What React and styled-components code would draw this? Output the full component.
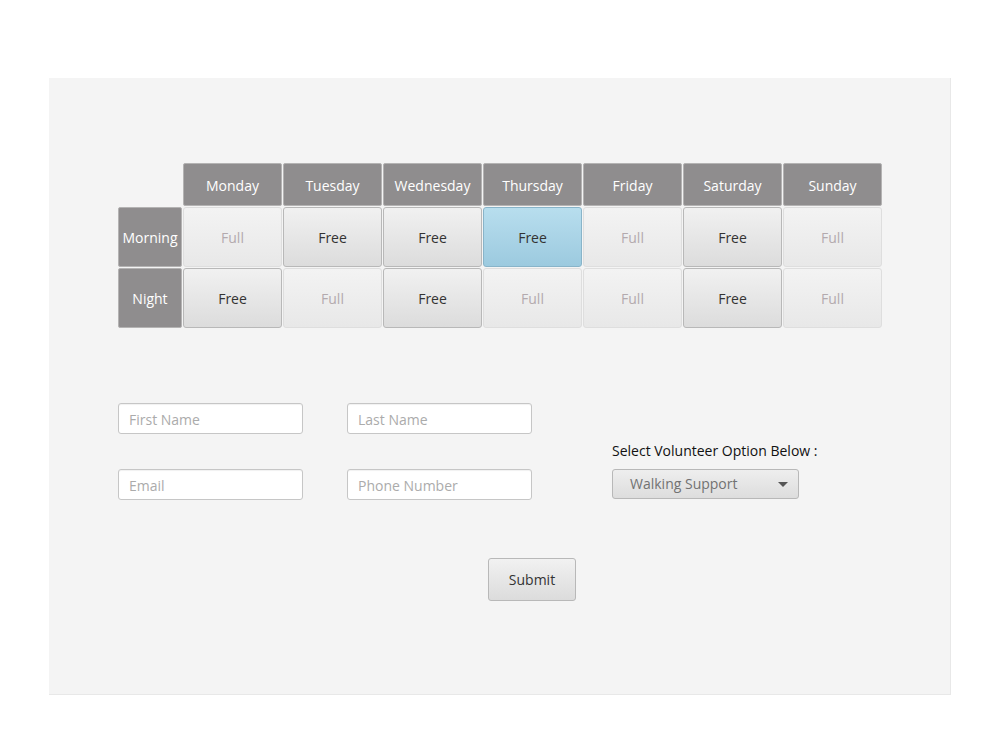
import React from "react";
import styled, { createGlobalStyle, css } from "styled-components";

const Global = createGlobalStyle`
  html, body { margin: 0; padding: 0; background: #ffffff; }
  body { font-family: "Open Sans", "Noto Sans", sans-serif; }
  * { box-sizing: border-box; }
`;

const Page = styled.div`
  width: 1005px;
  height: 739px;
  padding: 78px 0 0 49px;
`;

const Panel = styled.div`
  width: 902px;
  height: 617px;
  background: #f4f4f4;
  border-right: 1px solid #e8e8e8;
  border-bottom: 1px solid #e8e8e8;
  padding: 85px 0 0 69px;
  display: flex;
  flex-direction: column;
`;

const Schedule = styled.div`
  display: grid;
  grid-template-columns: 64px repeat(7, 99px);
  grid-template-rows: 43px 60px 60px;
  gap: 1px;
`;

const Corner = styled.div``;

const HeadCell = styled.div`
  background: #8f8d8e;
  border: 1px solid #b4b3b3;
  border-radius: 2px;
  color: #ffffff;
  font-size: 14px;
  display: flex;
  align-items: center;
  justify-content: center;
  padding-top: ${({ $row }) => ($row ? "0" : "2px")};
`;

const SlotButton = styled.button`
  font-family: inherit;
  font-size: 14px;
  border-radius: 3px;
  padding: 0;
  margin: 0;
  display: flex;
  align-items: center;
  justify-content: center;
  ${({ $state }) =>
    $state === "free"
      ? css`
          background: linear-gradient(#f1f1f1, #dcdcdc);
          border: 1px solid #b8b8b8;
          color: #333333;
        `
      : $state === "selected"
      ? css`
          background: linear-gradient(#b8deee, #9ccadf);
          border: 1px solid #88b4c9;
          color: #333333;
        `
      : css`
          background: linear-gradient(#f3f3f3, #e8e8e8);
          border: 1px solid #dedede;
          color: #b3aaae;
        `}
`;

const Form = styled.div`
  margin-top: 75px;
  display: grid;
  grid-template-columns: 185px 185px 187px;
  grid-template-rows: 31px 31px;
  column-gap: 44px;
  row-gap: 35px;
`;

const Field = styled.input`
  width: 185px;
  height: 31px;
  border: 1px solid #c6c6c6;
  border-radius: 3px;
  background: #ffffff;
  box-shadow: inset 0 1px 1px rgba(0, 0, 0, 0.06);
  padding: 2px 10px 0;
  font-family: inherit;
  font-size: 14px;
  color: #333;
  outline: none;
  &::placeholder { color: #ababab; }
`;

const OptionBlock = styled.div`
  grid-column: 3;
  grid-row: 1 / span 2;
  display: flex;
  flex-direction: column;
  justify-content: flex-end;
  margin-left: 36px;
`;

const OptionLabel = styled.div`
  font-size: 14px;
  color: #111;
  margin-bottom: 9px;
  white-space: nowrap;
`;

const Combo = styled.div`
  width: 187px;
  height: 30px;
  border: 1px solid #b8b8b8;
  border-radius: 3px;
  background: linear-gradient(#eeeeee, #dddddd);
  display: flex;
  align-items: center;
  justify-content: space-between;
  padding: 0 10px 1px 17px;
  color: #727272;
  font-size: 14px;
  margin-bottom: 1px;
`;

const Arrow = styled.span`
  width: 0;
  height: 0;
  margin-top: 2px;
  border-left: 5px solid transparent;
  border-right: 5px solid transparent;
  border-top: 5px solid #555;
`;

const SubmitRow = styled.div`
  margin-top: 58px;
  padding-left: 370px;
`;

const Submit = styled.button`
  width: 88px;
  height: 43px;
  border: 1px solid #b8b8b8;
  border-radius: 3px;
  background: linear-gradient(#f1f1f1, #dcdcdc);
  font-family: inherit;
  font-size: 14px;
  color: #333;
  padding: 0;
`;

const days = ["Monday", "Tuesday", "Wednesday", "Thursday", "Friday", "Saturday", "Sunday"];
const rows = [
  { name: "Morning", slots: ["full", "free", "free", "selected", "full", "free", "full"] },
  { name: "Night", slots: ["free", "full", "free", "full", "full", "free", "full"] },
];

export default function App() {
  return (
    <>
      <Global />
      <Page>
        <Panel>
          <Schedule>
            <Corner />
            {days.map((d) => (
              <HeadCell key={d}>{d}</HeadCell>
            ))}
            {rows.map((r) => (
              <React.Fragment key={r.name}>
                <HeadCell $row>{r.name}</HeadCell>
                {r.slots.map((s, i) => (
                  <SlotButton key={i} $state={s}>
                    {s === "full" ? "Full" : "Free"}
                  </SlotButton>
                ))}
              </React.Fragment>
            ))}
          </Schedule>
          <Form>
            <Field placeholder="First Name" />
            <Field placeholder="Last Name" />
            <OptionBlock>
              <OptionLabel>Select Volunteer Option Below :</OptionLabel>
              <Combo>
                <span>Walking Support</span>
                <Arrow />
              </Combo>
            </OptionBlock>
            <Field placeholder="Email" />
            <Field placeholder="Phone Number" />
          </Form>
          <SubmitRow>
            <Submit>Submit</Submit>
          </SubmitRow>
        </Panel>
      </Page>
    </>
  );
}
